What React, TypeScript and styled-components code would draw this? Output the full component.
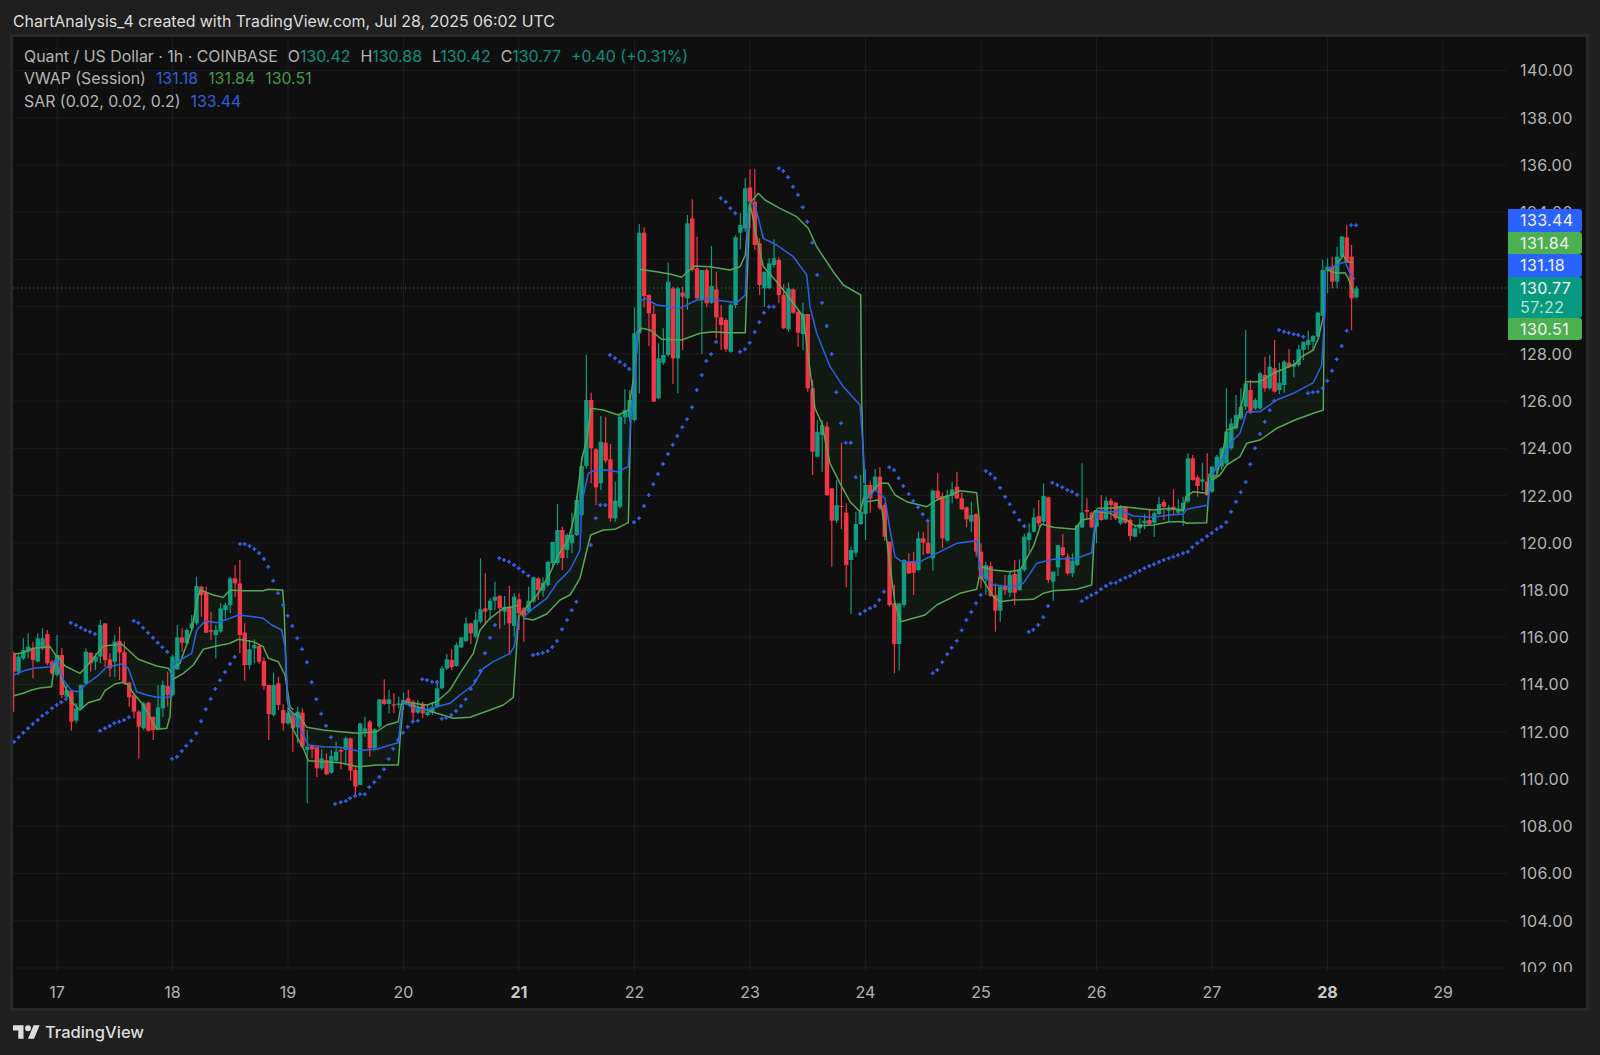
import styled, { createGlobalStyle } from "styled-components";

type Origin = [number, number];
type CandleRow = [number, number, number, number, number, number];
type Point = [number, number];

// the readings below are taken per crop, so every list keeps its crop origin
const Z4: Origin = [600, 160];
const Z5: Origin = [0, 560];
const Z7: Origin = [280, 540];
const Z8: Origin = [500, 220];
const Z9: Origin = [780, 370];
const Z10: Origin = [1020, 440];
const Z11: Origin = [1180, 210];

const HOUR = 4.8125;
const DAY_17 = 57;
const priceY = (p: number) => 968 - (p - 102) * 23.62;

const candles = (o: Origin, rows: CandleRow[]) =>
    rows.map(([zx, up, a, b, c, d]) => ({
        x: DAY_17 + Math.round((o[0] + zx / 3 - DAY_17) / HOUR) * HOUR,
        up: up === 1,
        top: o[1] + a / 3,
        bottom: o[1] + b / 3,
        hi: o[1] + c / 3,
        lo: o[1] + d / 3,
    }));

const pts = (o: Origin, list: Point[]): Point[] => list.map(([x, y]) => [o[0] + x / 3, o[1] + y / 3]);

const allCandles = [
    ...candles(Z5, [
        [42, 0, 280, 335, 275, 455], [56, 1, 290, 335, 280, 345], [70, 1, 270, 295, 235, 300], [84, 1, 260, 275, 220, 295],
        [98, 0, 265, 300, 245, 355], [112, 1, 235, 305, 220, 305], [126, 1, 235, 265, 205, 270], [141, 0, 222, 310, 210, 315],
        [155, 0, 305, 340, 300, 345], [170, 1, 285, 345, 225, 350], [184, 0, 285, 405, 265, 415], [198, 1, 390, 410, 370, 420],
        [212, 0, 392, 485, 392, 512], [228, 1, 445, 482, 430, 490], [242, 1, 375, 445, 375, 450], [256, 1, 275, 370, 265, 375],
        [270, 0, 278, 310, 278, 335], [285, 1, 290, 305, 280, 330], [300, 1, 195, 290, 180, 310], [315, 0, 190, 300, 190, 320],
        [328, 0, 298, 325, 280, 350], [343, 1, 245, 305, 225, 350], [357, 0, 243, 277, 200, 360], [372, 0, 277, 370, 245, 375],
        [386, 0, 368, 412, 365, 440], [401, 0, 405, 455, 400, 475], [415, 0, 455, 500, 450, 595], [430, 1, 430, 505, 425, 510],
        [444, 0, 428, 512, 425, 515], [459, 0, 470, 510, 470, 540], [473, 1, 442, 505, 375, 510], [487, 1, 375, 445, 362, 470],
        [502, 0, 378, 405, 335, 440], [516, 1, 290, 405, 285, 410], [531, 1, 232, 328, 195, 330], [545, 0, 232, 248, 205, 275],
        [559, 1, 210, 250, 205, 255], [574, 1, 190, 205, 165, 210], [588, 1, 78, 190, 50, 195], [603, 0, 80, 105, 78, 170],
        [617, 0, 98, 218, 80, 220], [632, 0, 210, 215, 155, 240], [646, 1, 210, 225, 195, 295], [660, 1, 145, 215, 130, 218],
        [675, 1, 135, 150, 128, 175], [690, 1, 55, 135, 50, 160], [704, 0, 55, 70, 15, 110], [718, 0, 70, 225, 0, 280],
        [733, 0, 218, 315, 190, 362], [748, 1, 268, 315, 240, 328], [762, 1, 255, 265, 238, 310], [776, 0, 258, 305, 255, 312],
        [791, 0, 303, 378, 292, 390], [806, 0, 375, 462, 375, 540], [820, 1, 375, 465, 338, 470], [834, 0, 370, 435, 350, 450],
        [849, 0, 450, 490, 432, 512], [863, 1, 458, 490, 440, 495], [877, 0, 462, 505, 460, 575], [891, 1, 455, 502, 440, 550],
    ]),
    ...candles(Z7, [
        [67, 0, 518, 620, 505, 625], [81, 1, 620, 630, 570, 790], [95, 0, 618, 628, 615, 655], [109, 0, 622, 685, 620, 712],
        [124, 1, 655, 685, 628, 690], [138, 0, 660, 703, 640, 705], [153, 1, 648, 698, 630, 702], [167, 1, 635, 662, 605, 670],
        [182, 0, 630, 635, 622, 688], [196, 1, 595, 630, 590, 670], [211, 0, 595, 692, 593, 722], [225, 0, 690, 740, 680, 765],
        [240, 1, 550, 735, 550, 735], [254, 1, 565, 575, 530, 590], [269, 0, 545, 625, 540, 650], [283, 1, 568, 625, 565, 628],
        [298, 1, 478, 560, 478, 565], [312, 0, 478, 492, 418, 495], [327, 1, 478, 492, 450, 520], [341, 0, 493, 497, 460, 520],
        [355, 1, 490, 495, 470, 505], [369, 1, 480, 490, 458, 510], [383, 0, 475, 490, 450, 495], [398, 0, 485, 518, 480, 545],
        [412, 1, 503, 518, 480, 522], [427, 0, 495, 520, 485, 535], [441, 1, 515, 525, 495, 530], [456, 1, 502, 518, 485, 525],
        [470, 1, 445, 500, 420, 505], [485, 1, 385, 445, 378, 448], [499, 1, 358, 385, 342, 390], [513, 0, 360, 382, 328, 390],
        [528, 1, 315, 378, 308, 380], [543, 1, 292, 322, 290, 325], [557, 1, 250, 303, 232, 305], [572, 0, 250, 280, 248, 312],
        [586, 1, 240, 290, 215, 295], [601, 1, 208, 245, 55, 250], [615, 0, 205, 215, 100, 255], [630, 1, 182, 210, 175, 240],
        [644, 1, 170, 182, 125, 210], [658, 0, 168, 205, 165, 268], [673, 1, 200, 215, 168, 255], [688, 0, 200, 250, 138, 345],
        [702, 1, 170, 258, 160, 290], [716, 0, 178, 220, 160, 270], [731, 0, 205, 230, 200, 305], [745, 1, 182, 215, 140, 218],
        [760, 1, 112, 185, 110, 188], [774, 0, 115, 150, 112, 180], [788, 1, 128, 152, 112, 170], [803, 1, 65, 135, 65, 140],
    ]),
    ...candles(Z8, [
        [157, 1, 966, 1030, 965, 1040], [171, 1, 930, 1029, 852, 1035], [186, 0, 930, 1014, 920, 1050], [200, 1, 945, 990, 940, 1015],
        [215, 1, 945, 970, 878, 1000], [229, 1, 840, 945, 828, 948], [243, 1, 738, 885, 710, 890], [258, 1, 540, 738, 405, 745],
        [272, 0, 540, 685, 518, 790], [287, 0, 688, 802, 685, 855], [301, 1, 665, 790, 588, 810], [316, 0, 668, 722, 592, 730],
        [330, 0, 718, 895, 672, 905], [345, 1, 842, 895, 785, 905], [359, 1, 590, 860, 580, 865], [374, 1, 570, 592, 508, 612],
        [388, 1, 540, 592, 510, 605], [402, 1, 340, 600, 262, 605], [417, 1, 38, 340, 12, 520], [431, 0, 38, 228, 22, 262],
    ]),
    ...candles(Z4, [
        [147, 0, 405, 460, 403, 558], [161, 0, 462, 725, 435, 725], [175, 1, 595, 715, 550, 718], [190, 1, 585, 608, 505, 615],
        [204, 1, 365, 585, 308, 590], [218, 0, 385, 595, 380, 672], [233, 1, 385, 595, 380, 700], [247, 0, 398, 410, 380, 570],
        [262, 1, 190, 415, 165, 450], [276, 0, 175, 330, 118, 335], [290, 0, 325, 415, 230, 418], [305, 1, 330, 418, 330, 582],
        [319, 0, 330, 430, 325, 442], [333, 1, 378, 428, 258, 432], [348, 0, 388, 472, 335, 535], [362, 0, 472, 495, 435, 570],
        [377, 0, 480, 568, 475, 575], [391, 1, 435, 575, 430, 578], [406, 1, 232, 435, 225, 445], [420, 1, 195, 218, 160, 268],
        [435, 1, 85, 205, 55, 215], [449, 0, 82, 125, 28, 205], [464, 0, 125, 255, 28, 270], [478, 0, 250, 375, 235, 405],
        [492, 1, 335, 385, 335, 440], [507, 1, 310, 385, 295, 388], [521, 1, 295, 315, 238, 322], [536, 0, 300, 405, 292, 430],
        [550, 0, 405, 505, 372, 508], [565, 1, 385, 508, 368, 515], [579, 0, 388, 458, 385, 462], [594, 0, 455, 518, 450, 560],
        [608, 1, 462, 522, 428, 570], [622, 0, 462, 685, 462, 695],
    ]),
    ...candles(Z9, [
        [98, 0, 55, 245, 30, 315], [112, 1, 185, 260, 150, 262], [127, 1, 165, 195, 150, 305], [141, 0, 170, 375, 155, 378],
        [156, 0, 355, 452, 355, 590], [170, 1, 405, 452, 330, 460], [185, 0, 408, 411, 218, 478], [199, 0, 428, 585, 400, 652],
        [214, 1, 540, 570, 530, 732], [228, 1, 462, 548, 425, 560], [243, 1, 425, 462, 315, 465], [257, 1, 345, 432, 298, 510],
        [271, 0, 345, 385, 332, 428], [286, 1, 320, 360, 298, 362], [300, 0, 320, 415, 292, 420], [315, 0, 405, 500, 400, 512],
        [329, 0, 515, 705, 515, 710], [344, 0, 700, 822, 645, 910], [358, 1, 700, 822, 700, 900], [372, 1, 570, 705, 568, 712],
        [387, 0, 575, 610, 550, 612], [401, 0, 575, 608, 545, 675], [416, 1, 505, 600, 485, 602], [430, 0, 505, 518, 485, 555],
        [445, 0, 518, 550, 455, 552], [459, 1, 362, 565, 360, 602], [473, 0, 362, 385, 310, 390], [488, 0, 378, 505, 368, 535],
        [502, 1, 375, 512, 360, 515], [516, 1, 358, 378, 335, 400], [530, 0, 350, 385, 305, 388], [545, 0, 385, 418, 368, 420],
        [559, 0, 412, 448, 410, 472], [574, 1, 435, 455, 395, 485], [588, 0, 432, 545, 430, 560], [603, 0, 545, 628, 520, 655],
        [617, 1, 585, 628, 575, 675], [631, 0, 588, 678, 575, 680], [645, 0, 675, 722, 640, 785], [660, 1, 650, 722, 645, 755],
        [675, 0, 648, 660, 615, 675], [689, 1, 615, 668, 600, 680], [703, 0, 612, 668, 570, 705], [718, 1, 598, 660, 568, 662],
        [732, 1, 500, 600, 490, 605], [747, 1, 488, 510, 460, 545], [761, 1, 442, 485, 415, 488], [776, 0, 438, 460, 390, 470],
    ]),
    ...candles(Z10, [
        [70, 1, 168, 245, 130, 250], [84, 0, 172, 420, 170, 428], [98, 1, 395, 425, 395, 482], [113, 1, 315, 382, 315, 408],
        [127, 0, 322, 345, 282, 350], [142, 0, 350, 400, 340, 405], [156, 1, 362, 400, 340, 412], [171, 1, 255, 375, 255, 378],
        [185, 1, 218, 262, 70, 265], [200, 0, 210, 215, 175, 240], [214, 0, 218, 262, 215, 265], [229, 1, 210, 260, 205, 310],
        [243, 0, 210, 240, 165, 242], [258, 1, 182, 238, 170, 240], [272, 0, 182, 195, 175, 240], [287, 0, 188, 235, 185, 240],
        [301, 1, 198, 250, 195, 255], [316, 0, 200, 248, 198, 252], [330, 0, 240, 288, 235, 302], [344, 1, 265, 290, 255, 292],
        [358, 1, 252, 265, 235, 280], [373, 1, 242, 250, 222, 268], [387, 0, 240, 252, 210, 258], [402, 1, 220, 248, 215, 290],
        [417, 1, 192, 222, 170, 225], [431, 0, 186, 200, 178, 240], [445, 1, 205, 212, 195, 245], [460, 0, 200, 210, 148, 225],
        [474, 1, 205, 218, 178, 222], [489, 1, 188, 210, 170, 258], [503, 1, 55, 185, 40, 188], [517, 0, 55, 120, 45, 122],
        [532, 0, 112, 138, 105, 170], [546, 1, 118, 125, 68, 150], [561, 0, 125, 165, 40, 168], [575, 1, 80, 155, 78, 160],
    ]),
    ...candles(Z11, [
        [110, 1, 740, 780, 735, 790], [125, 1, 715, 770, 712, 780], [139, 1, 665, 760, 535, 765], [154, 1, 640, 715, 625, 720],
        [168, 1, 615, 655, 555, 660], [182, 1, 590, 625, 535, 630], [197, 1, 520, 590, 360, 600], [211, 0, 540, 608, 510, 612],
        [226, 1, 570, 595, 565, 600], [240, 1, 490, 595, 485, 598], [255, 0, 495, 535, 440, 545], [269, 1, 470, 535, 435, 540],
        [283, 0, 475, 545, 390, 548], [298, 1, 518, 540, 458, 552], [312, 1, 455, 525, 450, 548], [326, 0, 458, 472, 418, 475],
        [341, 1, 462, 470, 450, 502], [355, 1, 418, 465, 405, 470], [370, 1, 395, 420, 395, 450], [384, 1, 390, 405, 362, 420],
        [398, 1, 378, 395, 375, 420], [412, 1, 308, 380, 305, 382], [427, 1, 180, 318, 150, 320], [441, 1, 170, 182, 145, 250],
        [456, 0, 170, 215, 140, 235], [470, 1, 140, 215, 110, 235], [485, 1, 80, 140, 78, 145], [499, 0, 82, 155, 45, 158],
        [513, 0, 140, 265, 105, 360], [527, 1, 235, 262, 228, 265],
    ]),
];

// VWAP bands, one block per session
const sessions: { upper: Point[]; vwap: Point[]; lower: Point[] }[] = [
    {
        upper: pts(Z5, [[42, 282], [70, 278], [100, 265], [150, 260], [170, 290]]),
        vwap: pts(Z5, [[42, 345], [70, 333], [100, 325], [150, 320], [170, 300]]),
        lower: pts(Z5, [[42, 407], [70, 400], [95, 390], [120, 384], [155, 380], [165, 300]]),
    },
    {
        upper: pts(Z5, [[170, 285], [195, 318], [240, 340], [255, 325], [310, 258], [365, 252], [415, 298], [470, 318], [505, 325], [516, 340]]),
        vwap: pts(Z5, [[170, 300], [190, 360], [215, 392], [235, 395], [255, 375], [290, 350], [320, 322], [365, 312], [385, 325], [410, 395], [440, 405], [470, 412], [510, 412], [516, 350]]),
        lower: pts(Z5, [[170, 305], [190, 370], [215, 425], [240, 450], [265, 428], [300, 418], [315, 392], [345, 372], [370, 367], [385, 375], [400, 400], [430, 435], [470, 508], [500, 505], [510, 470], [516, 345]]),
    },
    {
        upper: pts(Z5, [[516, 325], [540, 310], [575, 210], [590, 125], [600, 90], [640, 105], [670, 112], [690, 90], [730, 92], [790, 92], [805, 88], [848, 90], [852, 140], [862, 420], [868, 450]]),
        vwap: pts(Z5, [[516, 345], [520, 310], [540, 300], [575, 280], [590, 210], [615, 183], [650, 188], [690, 175], [715, 165], [760, 170], [790, 175], [815, 195], [845, 210], [855, 260], [862, 400], [868, 450]]),
        lower: pts(Z5, [[516, 360], [550, 340], [580, 315], [610, 268], [650, 258], [690, 250], [715, 238], [760, 245], [790, 260], [805, 295], [835, 305], [855, 345], [870, 440], [880, 450]]),
    },
    {
        upper: pts(Z7, [[24, 505], [40, 520], [60, 530], [80, 562], [130, 570], [180, 575], [235, 580], [290, 575], [320, 555], [355, 545], [362, 500], [370, 480]]),
        vwap: pts(Z7, [[24, 510], [50, 540], [70, 585], [85, 615], [130, 620], [180, 622], [230, 632], [290, 628], [320, 618], [355, 608], [362, 540], [370, 485]]),
        lower: pts(Z7, [[24, 510], [40, 570], [70, 625], [85, 662], [130, 665], [180, 668], [235, 680], [290, 675], [355, 675], [360, 600], [370, 490]]),
    },
    {
        upper: pts(Z7, [[370, 485], [400, 490], [440, 495], [470, 485], [510, 450], [540, 400], [580, 340], [600, 270], [630, 235], [670, 205], [700, 200], [715, 195]]),
        vwap: pts(Z7, [[370, 485], [400, 505], [440, 510], [470, 500], [510, 490], [540, 465], [580, 435], [610, 385], [640, 365], [690, 340], [703, 320], [715, 240]]),
        lower: pts(Z7, [[370, 490], [410, 500], [440, 510], [470, 520], [520, 535], [570, 532], [630, 510], [670, 495], [700, 472], [708, 350], [716, 225]]),
    },
    {
        upper: [...pts(Z7, [[720, 225], [745, 195], [775, 160], [810, 100], [835, 45]]), ...pts(Z8, [[205, 960], [225, 880], [245, 720], [262, 650], [272, 565], [310, 570], [355, 585], [385, 570], [400, 480], [415, 350]])],
        vwap: [...pts(Z7, [[730, 232], [760, 205], [800, 175], [830, 130], [870, 90], [900, 30]]), ...pts(Z8, [[245, 850], [265, 760], [280, 752], [320, 750], [350, 755], [385, 740], [392, 600], [402, 500], [415, 320]])],
        lower: [...pts(Z7, [[730, 235], [760, 240], [800, 222], [840, 180], [870, 165], [900, 115]]), ...pts(Z8, [[262, 985], [272, 945], [310, 930], [345, 928], [385, 908], [392, 600], [402, 480], [415, 340]])],
    },
    {
        upper: pts(Z4, [[118, 328], [170, 335], [210, 342], [245, 352], [262, 335], [285, 318], [330, 320], [390, 330], [420, 320], [436, 285], [448, 130]]),
        vwap: pts(Z4, [[118, 425], [135, 415], [170, 435], [210, 440], [240, 445], [290, 420], [330, 418], [410, 428], [436, 405], [445, 150]]),
        lower: pts(Z4, [[108, 520], [125, 505], [150, 510], [185, 538], [245, 540], [300, 520], [340, 515], [380, 518], [436, 518], [440, 400], [450, 130]]),
    },
    {
        upper: [...pts(Z4, [[450, 130], [475, 100], [495, 120], [540, 145], [590, 170], [625, 205], [650, 260], [700, 335], [730, 375], [782, 405]]), ...pts(Z9, [[245, 100], [252, 340]])],
        vwap: [...pts(Z4, [[450, 130], [465, 135], [490, 235], [530, 255], [580, 290], [620, 345], [630, 440], [650, 520], [690, 620], [730, 680]]), ...pts(Z9, [[240, 105], [250, 240], [255, 340]])],
        lower: [...pts(Z4, [[450, 130], [470, 230], [490, 320], [530, 365], [550, 390], [580, 430], [610, 470], [630, 630]]), ...pts(Z9, [[105, 115], [125, 160], [150, 280], [180, 340], [210, 395], [240, 425], [252, 380]])],
    },
    {
        upper: pts(Z9, [[258, 390], [280, 360], [300, 340], [325, 340], [345, 375], [380, 395], [440, 410], [470, 390], [510, 375], [540, 362], [590, 368], [598, 450], [598, 600]]),
        vwap: pts(Z9, [[258, 390], [285, 360], [315, 385], [330, 480], [345, 560], [365, 575], [420, 575], [470, 550], [530, 520], [590, 512], [595, 560], [605, 620]]),
        lower: pts(Z9, [[262, 395], [295, 390], [305, 415], [320, 510], [345, 700], [362, 755], [400, 745], [435, 735], [470, 705], [540, 670], [590, 658], [598, 620]]),
    },
    {
        upper: [...pts(Z9, [[603, 590], [640, 600], [690, 605], [720, 600], [760, 530]]), ...pts(Z10, [[60, 260], [65, 252], [100, 262], [165, 268], [185, 240], [215, 235], [222, 215], [232, 210]])],
        vwap: [...pts(Z9, [[603, 610], [640, 645], [700, 650], [730, 640]]), ...pts(Z10, [[50, 370], [100, 358], [170, 355], [215, 338], [222, 270], [232, 215]])],
        lower: [...pts(Z9, [[603, 620], [640, 680], [660, 695], [700, 690], [760, 688]]), ...pts(Z10, [[70, 460], [100, 452], [170, 448], [215, 435], [222, 300], [232, 210]])],
    },
    {
        upper: pts(Z10, [[232, 205], [265, 205], [310, 200], [350, 205], [400, 210], [450, 205], [490, 212], [498, 170], [520, 155], [560, 160], [568, 100]]),
        vwap: pts(Z10, [[232, 212], [270, 215], [310, 215], [340, 228], [400, 232], [450, 225], [490, 222], [500, 208], [530, 202], [565, 195], [570, 120]]),
        lower: pts(Z10, [[232, 215], [270, 220], [300, 235], [320, 240], [345, 258], [400, 255], [450, 245], [490, 245], [500, 250], [560, 248], [568, 130]]),
    },
    {
        upper: pts(Z11, [[96, 800], [110, 795], [130, 720], [140, 660], [170, 650], [190, 560], [197, 515], [240, 515], [280, 490], [345, 462], [365, 440], [400, 420], [415, 385], [430, 320]]),
        vwap: pts(Z11, [[96, 795], [125, 750], [160, 690], [180, 670], [200, 605], [240, 605], [290, 570], [340, 550], [400, 518], [425, 465], [435, 300], [435, 180]]),
        lower: pts(Z11, [[96, 810], [120, 795], [140, 765], [180, 740], [200, 700], [240, 690], [290, 655], [345, 630], [400, 610], [430, 600], [432, 400], [435, 180]]),
    },
    {
        upper: pts(Z11, [[442, 180], [470, 165], [490, 135], [500, 155], [520, 158]]),
        vwap: pts(Z11, [[442, 178], [470, 165], [495, 155], [510, 190], [525, 208]]),
        lower: pts(Z11, [[442, 180], [470, 190], [495, 188], [505, 205], [520, 250]]),
    },
];

const sarDots: Point[] = [
    ...pts(Z5, [
        [42, 545], [56, 532], [70, 518], [84, 505], [98, 492], [113, 480], [127, 467], [141, 458], [156, 445], [170, 435], [184, 427], [198, 418],
        [212, 188], [228, 196], [242, 203], [256, 210], [270, 215], [285, 222],
        [300, 512], [315, 505], [329, 498], [343, 490], [358, 485], [372, 480], [386, 472],
        [401, 182], [415, 188], [429, 203], [444, 218], [459, 233], [473, 248], [487, 262], [502, 275],
        [516, 596], [531, 590], [545, 573], [559, 557], [574, 542], [589, 520], [603, 484], [617, 448], [632, 417], [646, 387], [660, 361], [675, 336], [690, 312], [704, 291],
        [805, 20], [820, 62], [834, 100], [849, 135],
    ]),
    [240, 544], [244.7, 544], [249.5, 546], [254.3, 549], [259.1, 553], [263.9, 559],
    ...pts(Z7, [
        [10, 195], [23, 227], [37, 258], [52, 295], [66, 328], [81, 367], [95, 427], [109, 478], [124, 521], [138, 557], [153, 592],
        [165, 792], [182, 787], [197, 783], [210, 775], [225, 768], [240, 763], [254, 763], [268, 742], [283, 727], [298, 711], [312, 688], [326, 657], [340, 626], [354, 600], [369, 578], [383, 560], [398, 545], [413, 542],
        [427, 418], [441, 420], [456, 425], [471, 427],
        [485, 536], [499, 533], [514, 525], [528, 513], [543, 498], [557, 478], [572, 447], [586, 422], [601, 392], [615, 340], [630, 293], [645, 255],
        [658, 55], [672, 60], [687, 65], [702, 75], [716, 85], [730, 96], [745, 107],
        [759, 345], [773, 342], [788, 338], [803, 333], [817, 321], [831, 303], [846, 268], [861, 240], [875, 211], [889, 185],
    ]),
    ...pts(Z8, [
        [272, 975], [287, 895], [301, 855], [316, 855],
        [330, 405], [345, 415], [359, 425], [374, 435], [388, 447],
        [402, 907], [417, 895], [432, 858], [446, 825], [460, 793], [474, 762], [489, 732], [504, 702], [518, 674], [532, 648], [547, 622], [561, 598], [576, 562],
    ]),
    ...pts(Z4, [
        [290, 690], [305, 645], [319, 603], [333, 583], [348, 545],
        [362, 115], [377, 125], [391, 145], [406, 160],
        [420, 575], [435, 568], [449, 548], [464, 516], [478, 487], [492, 458], [507, 440], [521, 440],
        [536, 25], [550, 33], [564, 52], [579, 80], [594, 105], [608, 142], [622, 185], [637, 248], [652, 345], [666, 428], [680, 498], [695, 582],
    ]),
    ...pts(Z9, [
        [169, 67], [183, 160], [197, 218], [212, 218], [227, 322],
        [240, 732], [255, 722], [270, 715], [285, 708], [298, 690], [312, 665],
        [328, 292], [342, 300], [356, 325], [370, 348], [386, 372], [400, 393], [414, 412], [428, 433], [443, 452],
        [458, 910], [472, 900], [487, 877], [502, 853], [515, 833], [530, 812], [545, 781], [559, 750], [574, 726], [588, 700], [602, 675],
        [617, 303], [631, 312], [645, 325], [660, 353], [675, 380], [689, 403], [703, 427], [718, 450], [733, 468],
        [746, 785], [760, 779], [775, 765],
    ]),
    ...pts(Z10, [
        [70, 532], [84, 498],
        [97, 128], [112, 135], [127, 142], [142, 150], [156, 155], [171, 164],
        [185, 484], [200, 473], [214, 466], [229, 458], [243, 448], [258, 438], [272, 430], [287, 428], [301, 420], [316, 413], [330, 407], [345, 398], [359, 392], [373, 385], [388, 378], [402, 373], [417, 366], [431, 360], [446, 355], [460, 350], [474, 345], [489, 340], [503, 335], [517, 322], [532, 310], [546, 300], [561, 289], [575, 279], [590, 268], [604, 260], [619, 247], [633, 215], [648, 185], [662, 157],
    ]),
    ...pts(Z11, [
        [197, 816], [211, 763], [225, 715], [240, 672], [254, 635], [269, 601], [283, 572],
        [297, 360], [312, 365], [326, 368], [341, 373], [355, 375], [370, 380],
        [384, 550], [398, 547], [413, 545], [428, 535], [442, 512], [456, 482], [470, 448], [485, 408], [500, 362],
        [514, 46], [528, 46],
    ]),
];

const PRICES = Array.from({ length: 20 }, (_, i) => 140 - i * 2);
const DAYS = Array.from({ length: 13 }, (_, i) => 17 + i);
const dayX = (d: number) => DAY_17 + (d - 17) * 115.5;

// these two sit fully behind the price tags
const HIDDEN_PRICES = [132, 130];

const toLine = (list: Point[]) => list.map(([x, y]) => `${x.toFixed(1)},${y.toFixed(1)}`).join(" ");

const tones = {
    blue: "#2962ff",
    green: "#4caf50",
    teal: "#089981",
};

const legendTones = {
    label: "#b4b4b4",
    blue: "#2d5fdc",
    green: "#419a47",
    teal: "#14907a",
};

const GlobalStyle = createGlobalStyle`
    html, body {
        margin: 0;
        padding: 0;
        background: #1f1f1f;
    }
`;

const Page = styled.div`
    width: 1600px;
    height: 1055px;
    overflow: hidden;
    background: #1f1f1f;
    font-family: Inter, "Liberation Sans", sans-serif;
`;

const Caption = styled.div`
    height: 34px;
    padding: 8px 0 0 13px;
    box-sizing: border-box;
    display: flex;
    align-items: center;
    font-size: 15.9px;
    color: #dcdcdc;
`;

const Frame = styled.div`
    width: 1579px;
    margin-left: 10px;
    box-sizing: border-box;
    border: 3px solid #282828;
    background: #0f0f0f;
`;

const PlotRow = styled.div`
    position: relative;
    display: flex;
    height: 935px;
    overflow: hidden;
`;

const Plot = styled.div`
    position: relative;
    width: 1494px;
    flex: none;
`;

const ChartSvg = styled.svg`
    display: block;
`;

const Legend = styled.div`
    position: absolute;
    left: 11px;
    top: 9px;
    display: flex;
    flex-direction: column;
    font-size: 15.9px;
    line-height: 22.4px;
`;

const LegendRow = styled.div`
    display: flex;
    gap: 10px;
`;

const Value = styled.span<{ $tone: keyof typeof legendTones }>`
    color: ${(p) => legendTones[p.$tone]};
`;

const PriceAxis = styled.div`
    flex: 1;
    padding: 9.8px 0 0 13px;
    display: flex;
    flex-direction: column;
`;

const PriceLabel = styled.div`
    height: 47.24px;
    flex: none;
    display: flex;
    align-items: center;
    font-size: 16px;
    letter-spacing: 0.4px;
    color: #b4b4b4;
`;

const TagStack = styled.div`
    position: absolute;
    left: 1495px;
    top: 172.4px;
    width: 74px;
    display: flex;
    flex-direction: column;
`;

const Tag = styled.div<{ $tone: keyof typeof tones }>`
    height: 22.4px;
    padding: 1px 0 0 12px;
    box-sizing: border-box;
    background: ${(p) => tones[p.$tone]};
    border-radius: 0 3px 3px 0;
    font-size: 16px;
    letter-spacing: 0.4px;
    line-height: 21px;
    color: #f2f2f2;
`;

const LastTag = styled(Tag)`
    height: 41px;
    line-height: 19px;
    padding-top: 2px;
`;

const Countdown = styled.div`
    color: #b5e2d8;
`;

const TimeAxis = styled.div`
    height: 36px;
    padding-top: 4px;
    box-sizing: border-box;
    display: flex;
    overflow: hidden;
`;

const TimeLabel = styled.div<{ $strong?: boolean }>`
    width: 115.5px;
    flex: none;
    text-align: center;
    font-size: 16px;
    line-height: 32px;
    font-weight: ${(p) => (p.$strong ? 700 : 400)};
    color: ${(p) => (p.$strong ? "#c8c8c8" : "#b4b4b4")};
    &:first-child {
        margin-left: -13.75px;
    }
`;

const Footer = styled.div`
    display: flex;
    align-items: center;
    gap: 5px;
    height: 42px;
    padding-left: 13px;
    color: #dedede;
`;

const BrandName = styled.span`
    font-size: 16.5px;
    font-weight: 500;
`;

function App() {
    return (
        <Page>
            <GlobalStyle />
            <Caption>ChartAnalysis_4 created with TradingView.com, Jul 28, 2025 06:02 UTC</Caption>
            <Frame>
                <PlotRow>
                    <Plot>
                        <ChartSvg width={1494} height={935} viewBox="13 37 1494 935">
                            {PRICES.map((p) => (
                                <line key={p} x1={13} x2={1507} y1={priceY(p)} y2={priceY(p)} stroke="#1c1c1c" strokeWidth={1} />
                            ))}
                            {DAYS.map((d) => (
                                <line key={d} x1={dayX(d)} x2={dayX(d)} y1={37} y2={972} stroke="#1c1c1c" strokeWidth={1} />
                            ))}
                            {sessions.map((s, i) => (
                                <polygon key={i} points={toLine([...s.upper, ...[...s.lower].reverse()])} fill="#4caf50" fillOpacity={0.07} />
                            ))}
                            <line x1={13} x2={1507} y1={288} y2={288} stroke="#089981" strokeWidth={1} strokeDasharray="1 3" />
                            {allCandles.map((c) => {
                                const color = c.up ? "#0f9c80" : "#f23645";
                                return (
                                    <g key={c.x}>
                                        <line x1={c.x} x2={c.x} y1={c.hi} y2={c.lo} stroke={color} strokeWidth={1.2} />
                                        <rect x={c.x - 2.2} y={c.top} width={4.4} height={Math.max(c.bottom - c.top, 1)} fill={color} />
                                    </g>
                                );
                            })}
                            {sessions.map((s, i) => (
                                <g key={i} fill="none" strokeWidth={1.5} strokeLinejoin="round">
                                    <polyline points={toLine(s.upper)} stroke="#55a655" />
                                    <polyline points={toLine(s.lower)} stroke="#55a655" />
                                    <polyline points={toLine(s.vwap)} stroke="#2962e8" />
                                </g>
                            ))}
                            <path
                                d={sarDots.map(([x, y]) => `M${(x - 2).toFixed(1)} ${y.toFixed(1)}h4M${x.toFixed(1)} ${(y - 2).toFixed(1)}v4`).join("")}
                                stroke="#3560e6"
                                strokeWidth={1.5}
                                fill="none"
                            />
                        </ChartSvg>
                        <Legend>
                            <LegendRow>
                                <Value $tone="label">Quant / US Dollar · 1h · COINBASE</Value>
                                <span>
                                    <Value $tone="label">O</Value>
                                    <Value $tone="teal">130.42</Value>
                                </span>
                                <span>
                                    <Value $tone="label">H</Value>
                                    <Value $tone="teal">130.88</Value>
                                </span>
                                <span>
                                    <Value $tone="label">L</Value>
                                    <Value $tone="teal">130.42</Value>
                                </span>
                                <span>
                                    <Value $tone="label">C</Value>
                                    <Value $tone="teal">130.77</Value>
                                </span>
                                <Value $tone="teal">+0.40 (+0.31%)</Value>
                            </LegendRow>
                            <LegendRow>
                                <Value $tone="label">VWAP (Session)</Value>
                                <Value $tone="blue">131.18</Value>
                                <Value $tone="green">131.84</Value>
                                <Value $tone="green">130.51</Value>
                            </LegendRow>
                            <LegendRow>
                                <Value $tone="label">SAR (0.02, 0.02, 0.2)</Value>
                                <Value $tone="blue">133.44</Value>
                            </LegendRow>
                        </Legend>
                    </Plot>
                    <PriceAxis>
                        {PRICES.map((p) => (
                            <PriceLabel key={p}>{HIDDEN_PRICES.includes(p) ? "" : p.toFixed(2)}</PriceLabel>
                        ))}
                    </PriceAxis>
                    <TagStack>
                        <Tag $tone="blue">133.44</Tag>
                        <Tag $tone="green">131.84</Tag>
                        <Tag $tone="blue">131.18</Tag>
                        <LastTag $tone="teal">
                            130.77
                            <Countdown>57:22</Countdown>
                        </LastTag>
                        <Tag $tone="green">130.51</Tag>
                    </TagStack>
                </PlotRow>
                <TimeAxis>
                    {DAYS.map((d) => (
                        <TimeLabel key={d} $strong={d === 21 || d === 28}>
                            {d}
                        </TimeLabel>
                    ))}
                </TimeAxis>
            </Frame>
            <Footer>
                <svg width={27} height={14} viewBox="0 4 36 18" fill="currentColor">
                    <path d="M14 22H7V11H0V4h14v18zM28 22h-8l7.5-18h8L28 22z" />
                    <circle cx={20} cy={8} r={4} />
                </svg>
                <BrandName>TradingView</BrandName>
            </Footer>
        </Page>
    );
}

export default App;
